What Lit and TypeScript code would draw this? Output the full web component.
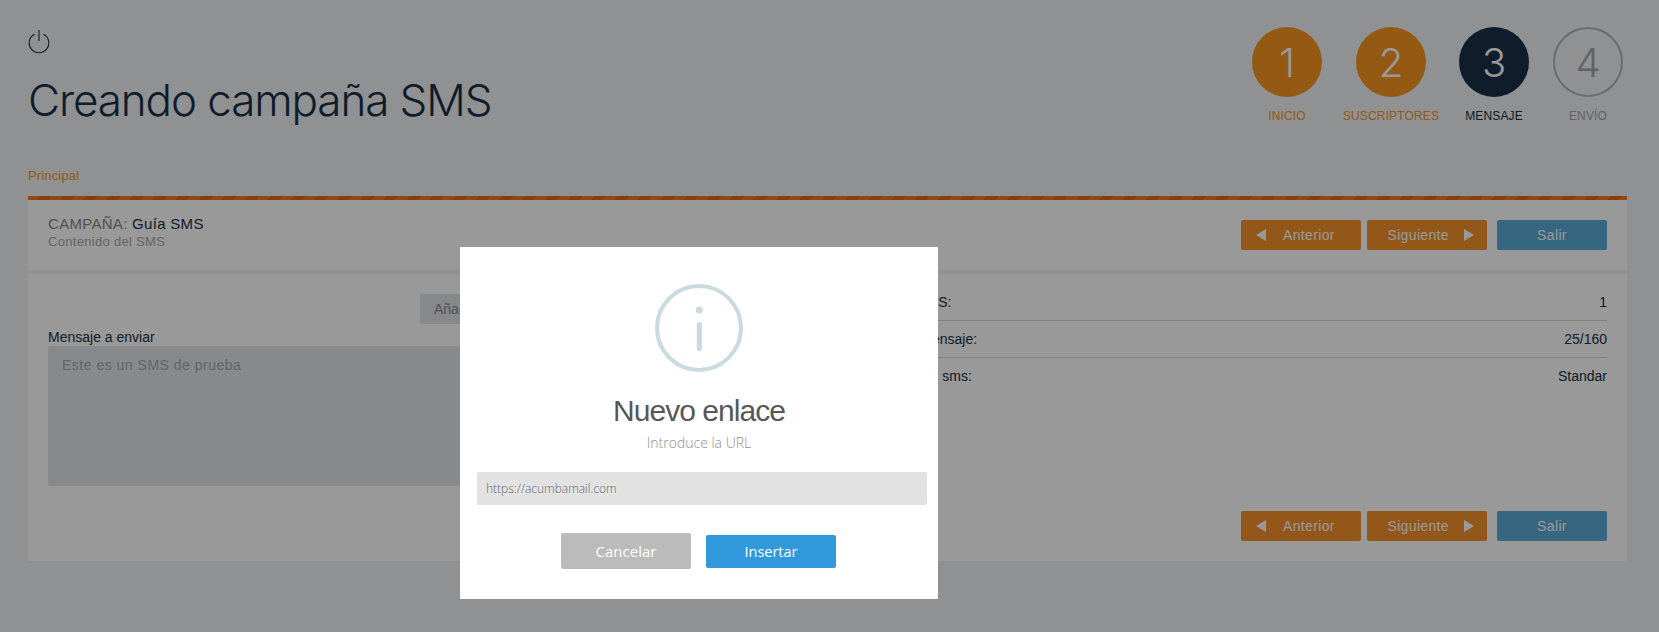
import { LitElement, html, css } from "lit";
import { customElement } from "lit/decorators.js";

const sans = css`"Liberation Sans", Arial, sans-serif`;

@customElement("nav-buttons")
class NavButtons extends LitElement {
  static styles = css`
    :host { display: flex; gap: 6px; }
    .btn {
      height: 30px; width: 120px; box-sizing: border-box; border-radius: 2px; color: #fff;
      font: 14px ${sans}; letter-spacing: 0.35px; display: flex; align-items: center;
      background: #f5922b;
    }
    .prev { padding-left: 15px; }
    .next { justify-content: flex-end; padding-right: 13px; }
    .exit { width: 110px; margin-left: 4px; background: #5aaad5; justify-content: center; }
    .tri { width: 0; height: 0; border-top: 6px solid transparent; border-bottom: 6px solid transparent; }
    .left { border-right: 10px solid #fff; margin-right: 17px; }
    .right { border-left: 10px solid #fff; margin-left: 15px; }
  `;
  render() {
    return html`
      <div class="btn prev"><span class="tri left"></span>Anterior</div>
      <div class="btn next">Siguiente<span class="tri right"></span></div>
      <div class="btn exit">Salir</div>
    `;
  }
}

@customElement("app-root")
class AppRoot extends LitElement {
  static styles = css`
    :host { display: block; position: relative; height: 632px; overflow: hidden; background: #eef2f5; font-family: ${sans}; color: #1a3046; }
    .page { padding: 27px 32px 0 28px; }
    .head { display: flex; justify-content: space-between; align-items: flex-start; height: 139px; padding-right: 4px; }
    .power { display: block; margin-top: 3px; }
    h1 { margin: 18px 0 0; font: 300 44px/56px Inter, sans-serif; letter-spacing: -1.1px; color: #1a3046; }
    .steps { display: flex; gap: 20px; }
    .step { display: flex; flex-direction: column; align-items: center; min-width: 70px; }
    .step:nth-child(2) { width: 96px; margin-left: 1px; }
    .step:last-child { margin-left: 4px; }
    .dot {
      width: 70px; height: 70px; box-sizing: border-box; border-radius: 50%; display: flex; align-items: center; justify-content: center;
      font: 300 40px Inter, sans-serif; color: #fff; background: #f7941e;
    }
    .lbl { margin-top: 12px; font-size: 12px; line-height: 14px; letter-spacing: 0.15px; white-space: nowrap; color: #f7941e; }
    .now .dot { background: #1a3046; }
    .now .lbl { color: #1a3046; }
    .todo .dot { background: none; border: 2px solid #b5b5b5; color: #a5a5a5; }
    .todo .lbl { color: #a5a5a5; }
    .tab { font-size: 13px; line-height: 16px; letter-spacing: 0.15px; color: #f7941e; height: 30px; box-sizing: border-box; padding-top: 2px; }
    .stripe { height: 4px; background: repeating-linear-gradient(120deg, #ec7a26 0 10px, #e4641a 10px 20px); }
    .bar { height: 70px; box-sizing: border-box; background: #fff; display: flex; justify-content: space-between; align-items: center; padding: 0 20px; }
    .info { margin-top: -4px; }
    .name { font-size: 15px; line-height: 18px; letter-spacing: 0.3px; color: #1a3046; }
    .name span { color: #888; }
    .sub { font-size: 13px; line-height: 18px; letter-spacing: 0.3px; color: #a8a8a8; }
    .main { margin-top: 4px; height: 287px; box-sizing: border-box; background: #fff; padding: 20px; display: flex; flex-direction: column; justify-content: space-between; }
    .cols { display: flex; gap: 30px; }
    .left { width: 766px; }
    .add { height: 30px; width: 160px; margin-left: 372px; box-sizing: border-box; padding: 0 14px; background: #dfe4e8; border-radius: 2px; font-size: 14px; line-height: 30px; color: #888; }
    .msg { margin-top: 4px; font-size: 14px; line-height: 18px; }
    .area { height: 140px; box-sizing: border-box; background: #e0e6ea; border-radius: 2px; padding: 10px 14px; font-size: 14px; line-height: 18px; letter-spacing: 0.5px; color: #a5a9ad; }
    .right { flex: 1; margin-top: -11px; }
    .row { display: flex; justify-content: space-between; height: 37px; box-sizing: border-box; border-top: 1px solid transparent; font-size: 14px; line-height: 36px; }
    .row + .row { border-top-color: #d8d8d8; }
    .foot { display: flex; justify-content: flex-end; }
    .overlay { position: absolute; inset: 0; background: rgba(0, 0, 0, 0.4); }
    .modal {
      position: absolute; left: 460px; top: 247px; width: 478px; height: 352px; box-sizing: border-box; background: #fff;
      padding-top: 37px; display: flex; flex-direction: column; align-items: center;
    }
    .icon { display: block; }
    .title { margin-top: 21px; font-size: 30px; line-height: 36px; letter-spacing: -0.95px; color: #575757; }
    .hint { margin-top: 4px; font: 300 14px/20px "Open Sans", sans-serif; color: #8f8f8f; }
    .input { margin: 19px 0 0 17px; align-self: flex-start; width: 450px; height: 33px; box-sizing: border-box; padding: 0 9px; background: #e2e2e2; border-radius: 2px; font: 300 12px/33px "Open Sans", sans-serif; color: #666; }
    .actions { margin: 28px 0 0 -1px; display: flex; gap: 15px; align-items: center; }
    .b { width: 130px; border-radius: 2px; color: #fff; text-align: center; font: 15px "Open Sans", sans-serif; }
    .cancel { height: 36px; line-height: 36px; background: #bbbbbb; }
    .ok { height: 33px; line-height: 33px; font-size: 14.5px; background: #3099db; }
  `;
  render() {
    const steps = [["1","INICIO",""],["2","SUSCRIPTORES",""],["3","MENSAJE","now"],["4","ENVÍO","todo"]];
    return html`
      <div class="page">
        <div class="head">
          <div>
            <svg class="power" width="22" height="24" viewBox="0 0 22 24" fill="none" stroke="#1a3046" stroke-width="1.1">
              <path d="M6.5 4.3a9.8 9.8 0 1 0 9 0"/><path d="M11 0v11"/>
            </svg>
            <h1>Creando campaña SMS</h1>
          </div>
          <div class="steps">
            ${steps.map(([n,l,c]) => html`<div class="step ${c}"><div class="dot">${n}</div><div class="lbl">${l}</div></div>`)}
          </div>
        </div>
        <div class="tab">Principal</div>
        <div class="stripe"></div>
        <div class="bar">
          <div class="info">
            <div class="name"><span>CAMPAÑA:</span> Guía SMS</div>
            <div class="sub">Contenido del SMS</div>
          </div>
          <nav-buttons></nav-buttons>
        </div>
        <div class="main">
          <div class="cols">
            <div class="left">
              <div class="add">Añadir enlace</div>
              <div class="msg">Mensaje a enviar</div>
              <div class="area">Este es un SMS de prueba</div>
            </div>
            <div class="right">
              <div class="row"><span>Número de SMS:</span><span>1</span></div>
              <div class="row"><span>Tamaño del mensaje:</span><span>25/160</span></div>
              <div class="row"><span>Tipo de calidad sms:</span><span>Standar</span></div>
            </div>
          </div>
          <div class="foot"><nav-buttons></nav-buttons></div>
        </div>
      </div>
      <div class="overlay"></div>
      <div class="modal">
        <svg class="icon" width="88" height="88" viewBox="0 0 88 88" fill="none">
          <circle cx="44" cy="44" r="42" stroke="#c9dae1" stroke-width="4"/>
          <circle cx="44.3" cy="26" r="3.5" fill="#c9dae1"/>
          <rect x="41.8" y="38" width="5" height="29" rx="2.5" fill="#c9dae1"/>
        </svg>
        <div class="title">Nuevo enlace</div>
        <div class="hint">Introduce la URL</div>
        <div class="input">https://acumbamail.com</div>
        <div class="actions">
          <div class="b cancel">Cancelar</div>
          <div class="b ok">Insertar</div>
        </div>
      </div>
    `;
  }
}
